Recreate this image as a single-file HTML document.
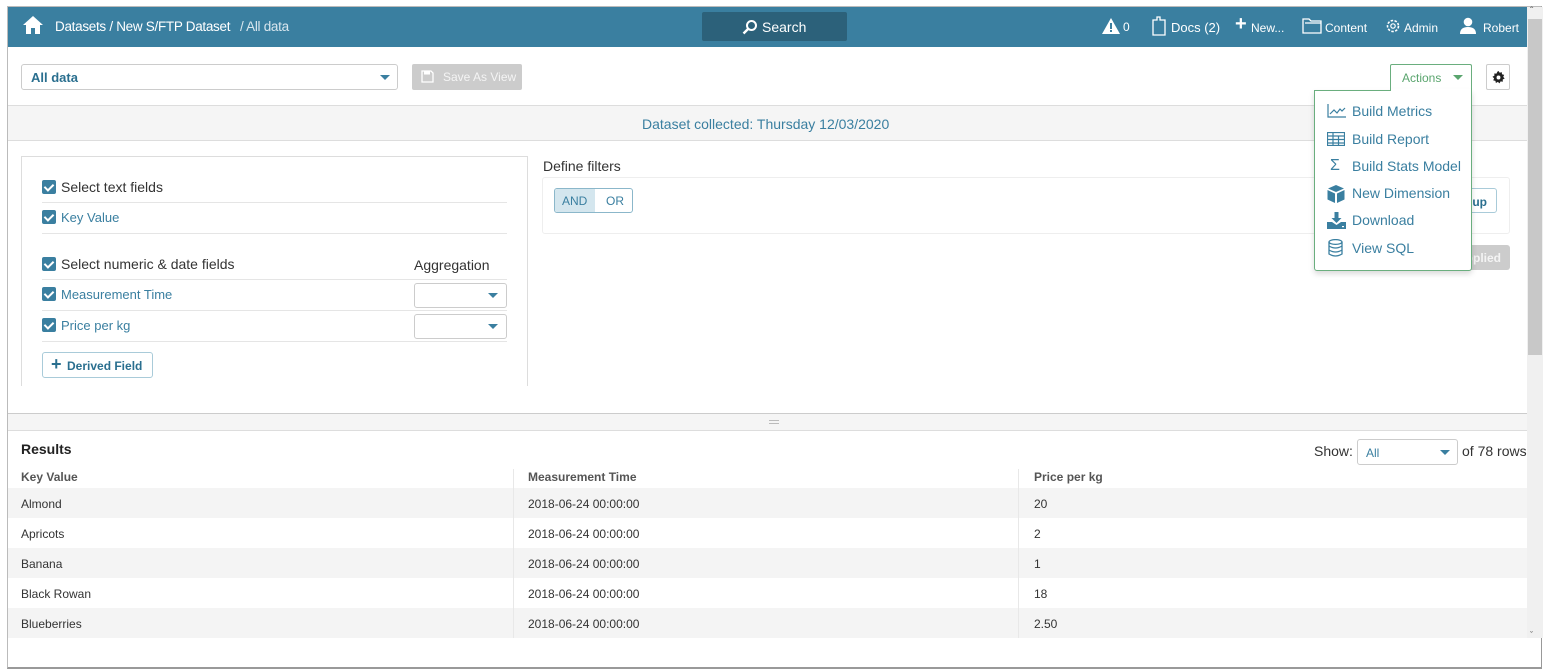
<!DOCTYPE html>
<html><head><meta charset="utf-8"><style>
*{box-sizing:border-box;margin:0;padding:0}
body{width:1549px;height:672px;background:#fff;font-family:"Liberation Sans",Arial,sans-serif;font-size:13px;color:#333;position:relative;overflow:hidden}
.a{position:absolute}
.frame{left:7px;top:6px;width:1535px;height:663px;border:1px solid #bbb;border-bottom:2px solid #999;border-right:1px solid #999}
.hdr{left:8px;top:7px;width:1519px;height:40px;background:#3a7fa0;color:#fff;font-size:14px}
.hdr span{position:absolute;top:12px}
.cb{display:inline-block;width:14px;height:14px;background:#3a7fa0;border-radius:2px;vertical-align:-2px;margin-right:5px;position:relative}
.cb:after{content:"";position:absolute;left:4px;top:1.5px;width:4px;height:7px;border:solid #fff;border-width:0 2px 2px 0;transform:rotate(45deg)}
.line{height:1px;background:#e5e5e5}
.sel{border:1px solid #ccc;border-radius:3px;background:#fff}
.caret{position:absolute;width:0;height:0;border-left:5px solid transparent;border-right:5px solid transparent;border-top:5px solid #3a7fa0}
.row{left:8px;width:1519px;height:30px}
.row span{position:absolute;top:9px;font-size:12px;color:#333}
.mi{position:absolute;left:1352px;font-size:14px;color:#3a7fa0}
.ic{position:absolute;left:1327px}
</style></head><body>
<div class="a frame"></div>
<div class="a hdr">
<svg class="a" style="left:14px;top:8px" width="22" height="20" viewBox="0 0 22 20"><path d="M11 1 L1 10 H4 V19 H9 V13 H13 V19 H18 V10 H21 Z" fill="#fff"/></svg>
<span style="left:47px;font-size:13.5px;letter-spacing:-0.3px">Datasets / New S/FTP Dataset</span><span style="left:232px;color:#d8e6ee;font-size:13.5px;letter-spacing:-0.3px">/ All data</span>
<div class="a" style="left:694px;top:5px;width:145px;height:29px;background:#2c617a;border-radius:2px"></div>
<svg class="a" style="left:734px;top:12px" width="16" height="16" viewBox="0 0 16 16"><circle cx="9.5" cy="6.5" r="4.5" stroke="#fff" stroke-width="2" fill="none"/><path d="M6 10 L1.5 14.5" stroke="#fff" stroke-width="2.4"/></svg>
<span style="left:754px">Search</span>
<svg class="a" style="left:1094px;top:11px" width="18" height="16" viewBox="0 0 18 16"><path d="M9 0 L18 16 H0 Z" fill="#fff"/><rect x="8" y="5" width="2" height="6" fill="#3a7fa0"/><rect x="8" y="12" width="2" height="2" fill="#3a7fa0"/></svg>
<span style="left:1115px;font-size:12px;top:13px">0</span>
<svg class="a" style="left:1144px;top:9px" width="14" height="20" viewBox="0 0 14 20"><path d="M1 4 H5 V1 H8 V4 H13 V19 H1 Z" stroke="#fff" stroke-width="1.3" fill="none"/></svg>
<span style="left:1163px;font-size:13px;top:13px">Docs (2)</span>
<span style="left:1227px;font-size:20px;top:6px;font-weight:bold">+</span><span style="left:1243px;font-size:12px;top:14px">New...</span>
<svg class="a" style="left:1294px;top:11px" width="20" height="16" viewBox="0 0 20 16"><path d="M1 1 H7 L9 3 H19 V15 H1 Z M3 5 H19" stroke="#fff" stroke-width="1.3" fill="none"/></svg>
<span style="left:1317px;font-size:12px;top:14px">Content</span>
<svg class="a" style="left:1377px;top:11px" width="16" height="16" viewBox="0 0 16 16"><circle cx="8" cy="8" r="5.5" stroke="#fff" stroke-width="1.6" fill="none" stroke-dasharray="2.5 1.4"/><circle cx="8" cy="8" r="2.2" stroke="#fff" stroke-width="1.2" fill="none"/></svg>
<span style="left:1396px;font-size:12px;top:14px">Admin</span>
<svg class="a" style="left:1452px;top:10px" width="16" height="17" viewBox="0 0 16 17"><circle cx="8" cy="5" r="4.3" fill="#fff"/><path d="M0 17 Q0 10 8 10 Q16 10 16 17Z" fill="#fff"/></svg>
<span style="left:1475px;font-size:12px;top:14px">Robert</span>
</div>
<div class="a" style="left:1527px;top:7px;width:16px;height:631px;background:#f0f0f0"></div>
<div class="a" style="left:1528px;top:19px;width:14px;height:336px;background:#c8c8c8"></div>
<div class="a" style="left:1530px;top:6px;font-size:10px;color:#555">&#710;</div>
<div class="a sel" style="left:21px;top:64px;width:377px;height:26px"><span class="a" style="left:9px;top:5px;font-weight:bold;color:#2a6f8f">All data</span><div class="caret" style="left:358px;top:10px"></div></div>
<div class="a" style="left:412px;top:64px;width:110px;height:26px;background:#ccc;border-radius:2px;color:#f4f4f4;font-size:12px"><svg class="a" style="left:9px;top:6px" width="13" height="13" viewBox="0 0 13 13"><path d="M1 1 H10 L12 3 V12 H1 Z" stroke="#fff" stroke-width="1.3" fill="none"/><rect x="3" y="1.5" width="6" height="3" fill="#fff"/></svg><span class="a" style="left:31px;top:6px">Save As View</span></div>
<div class="a" style="left:1390px;top:64px;width:82px;height:27px;border:1px solid #6aae7e;border-bottom:none;border-radius:2px 2px 0 0;background:#fff;color:#5aa56e;font-size:12px"><span class="a" style="left:11px;top:6px">Actions</span><div class="caret" style="left:62px;top:10px;border-top-color:#5aa56e"></div></div>
<div class="a" style="left:1486px;top:64px;width:24px;height:26px;border:1px solid #ccc;border-radius:2px"><svg class="a" style="left:5px;top:6px" width="13" height="13" viewBox="0 0 16 16"><path d="M8 0 L9.5 2.2 L12 1.4 L12.3 4 L15 4.8 L13.8 7.2 L15.6 9.3 L13.2 10.5 L13.3 13.2 L10.6 12.8 L9.2 15.2 L7.2 13.4 L4.8 14.8 L4.2 12.1 L1.5 11.5 L2.6 9 L0.6 7 L3 5.7 L2.8 3 L5.5 3.3 L6.7 0.8 Z" fill="#222"/><circle cx="8" cy="8" r="2.4" fill="#fff"/></svg></div>
<div class="a" style="left:8px;top:105px;width:1519px;height:36px;background:#f5f5f5;border-top:1px solid #ddd;border-bottom:1px solid #ddd"></div>
<div class="a" style="left:642px;top:116px;font-size:14px;color:#3a7fa0">Dataset collected: Thursday 12/03/2020</div>
<div class="a" style="left:21px;top:156px;width:507px;height:230px;border:1px solid #ddd;border-bottom:none"></div>
<div class="a" style="left:42px;top:179px;font-size:14px"><span class="cb"></span>Select text fields</div>
<div class="a line" style="left:42px;top:202px;width:465px"></div>
<div class="a" style="left:42px;top:210px;color:#3a7fa0"><span class="cb"></span>Key Value</div>
<div class="a line" style="left:42px;top:233px;width:465px"></div>
<div class="a" style="left:42px;top:256px;font-size:14px"><span class="cb"></span>Select numeric &amp; date fields</div>
<div class="a" style="left:414px;top:257px;font-size:14px">Aggregation</div>
<div class="a line" style="left:42px;top:279px;width:465px"></div>
<div class="a" style="left:42px;top:287px;color:#3a7fa0"><span class="cb"></span>Measurement Time</div>
<div class="a sel" style="left:414px;top:283px;width:93px;height:25px"><div class="caret" style="left:73px;top:9px"></div></div>
<div class="a line" style="left:42px;top:310px;width:465px"></div>
<div class="a" style="left:42px;top:318px;color:#3a7fa0"><span class="cb"></span>Price per kg</div>
<div class="a sel" style="left:414px;top:314px;width:93px;height:25px"><div class="caret" style="left:73px;top:9px"></div></div>
<div class="a line" style="left:42px;top:341px;width:465px"></div>
<div class="a" style="left:42px;top:352px;width:111px;height:26px;border:1px solid #a9cbd9;border-radius:3px;color:#2a6f8f;font-weight:bold;font-size:12px"><span class="a" style="left:8px;top:1px;font-size:18px">+</span><span class="a" style="left:24px;top:6px">Derived Field</span></div>
<div class="a" style="left:543px;top:158px;font-size:14px">Define filters</div>
<div class="a" style="left:542px;top:177px;width:968px;height:57px;border:1px solid #eee;border-radius:3px"></div>
<div class="a" style="left:554px;top:188px;width:79px;height:25px;border:1px solid #8bb7ca;border-radius:3px;overflow:hidden;font-size:12px;color:#3a7fa0"><div class="a" style="left:0;top:0;width:40px;height:25px;background:#d4e6ee"></div><span class="a" style="left:7px;top:5px">AND</span><span class="a" style="left:51px;top:5px">OR</span></div>
<div class="a" style="left:1440px;top:188px;width:57px;height:25px;border:1px solid #a9cbd9;border-radius:3px;color:#2a6f8f;font-weight:bold;font-size:12px"><span class="a" style="right:9px;top:6px">Group</span></div>
<div class="a" style="left:1440px;top:245px;width:70px;height:25px;background:#ccc;border-radius:3px;color:#f4f4f4;font-weight:bold;font-size:12px"><span class="a" style="right:9px;top:6px">Applied</span></div>
<div class="a" style="left:1314px;top:90px;width:158px;height:181px;background:#fff;border:1px solid #6aae7e;border-radius:0 0 3px 3px;box-shadow:0 3px 6px rgba(0,0,0,.15)"></div>
<div class="a" style="left:1391px;top:89px;width:80px;height:2px;background:#fff"></div>
<svg class="ic" style="top:104px" width="19" height="14" viewBox="0 0 19 14"><path d="M1 0 V13 H19 M3 10 L7 6 L10 9 L13 5 L15 7 L18 4" stroke="#3a7fa0" stroke-width="1.2" fill="none"/></svg>
<span class="mi" style="top:103px">Build Metrics</span>
<svg class="ic" style="top:132px" width="18" height="14" viewBox="0 0 18 14"><path d="M0.5 0.5 H17.5 V13.5 H0.5 Z M0.5 4 H17.5 M0.5 7.5 H17.5 M0.5 11 H17.5 M6 0.5 V13.5 M11.5 4 V13.5" stroke="#3a7fa0" stroke-width="1.2" fill="none"/></svg>
<span class="mi" style="top:131px">Build Report</span>
<span class="a" style="left:1330px;top:157px;font-size:16px;color:#3a7fa0">Σ</span>
<span class="mi" style="top:158px">Build Stats Model</span>
<svg class="ic" style="top:185px" width="18" height="18" viewBox="0 0 18 18"><path d="M9 0 L17 3.5 L9 7 L1 3.5 Z" fill="#3a7fa0"/><path d="M0.5 5 L8 8.5 V18 L0.5 14.5 Z M17.5 5 L10 8.5 V18 L17.5 14.5 Z" fill="#3a7fa0"/></svg>
<span class="mi" style="top:185px">New Dimension</span>
<svg class="ic" style="top:212px" width="19" height="17" viewBox="0 0 19 17"><path d="M7.5 0 H11.5 V6 H14.5 L9.5 11 L4.5 6 H7.5 Z" fill="#3a7fa0"/><path d="M0 10 H5 L9.5 13 L14 10 H19 V17 H0 Z" fill="#3a7fa0"/><rect x="15" y="14" width="2" height="1.2" fill="#fff"/></svg>
<span class="mi" style="top:212px">Download</span>
<svg class="ic" style="left:1328px;top:239px" width="15" height="18" viewBox="0 0 15 18"><ellipse cx="7.5" cy="3" rx="6.5" ry="2.4" stroke="#3a7fa0" stroke-width="1.3" fill="none"/><path d="M1 3 V15 Q7.5 19 14 15 V3 M1 7 Q7.5 11 14 7 M1 11 Q7.5 15 14 11" stroke="#3a7fa0" stroke-width="1.3" fill="none"/></svg>
<span class="mi" style="top:240px">View SQL</span>
<div class="a" style="left:8px;top:413px;width:1519px;height:18px;background:#f5f5f5;border-top:1px solid #ccc;border-bottom:1px solid #ddd"></div>
<div class="a" style="left:769px;top:420px;width:10px;height:4px;border-top:1px solid #bbb;border-bottom:1px solid #bbb"></div>
<div class="a" style="left:21px;top:441px;font-size:14px;font-weight:bold;color:#222">Results</div>
<div class="a" style="left:1314px;top:443px;font-size:14px">Show:</div>
<div class="a sel" style="left:1357px;top:439px;width:101px;height:26px"><span class="a" style="left:8px;top:6px;font-size:12px;color:#3a7fa0">All</span><div class="caret" style="left:82px;top:10px"></div></div>
<div class="a" style="left:1462px;top:443px;font-size:14px">of 78 rows</div>
<div class="a" style="left:21px;top:470px;font-size:12px;font-weight:bold;color:#555">Key Value</div>
<div class="a" style="left:528px;top:470px;font-size:12px;font-weight:bold;color:#555">Measurement Time</div>
<div class="a" style="left:1034px;top:470px;font-size:12px;font-weight:bold;color:#555">Price per kg</div>
<div class="a row" style="top:488px;background:#f4f4f4"><span style="left:13px">Almond</span><span style="left:520px">2018-06-24 00:00:00</span><span style="left:1026px">20</span></div>
<div class="a row" style="top:518px"><span style="left:13px">Apricots</span><span style="left:520px">2018-06-24 00:00:00</span><span style="left:1026px">2</span></div>
<div class="a row" style="top:548px;background:#f4f4f4"><span style="left:13px">Banana</span><span style="left:520px">2018-06-24 00:00:00</span><span style="left:1026px">1</span></div>
<div class="a row" style="top:578px"><span style="left:13px">Black Rowan</span><span style="left:520px">2018-06-24 00:00:00</span><span style="left:1026px">18</span></div>
<div class="a row" style="top:608px;background:#f4f4f4"><span style="left:13px">Blueberries</span><span style="left:520px">2018-06-24 00:00:00</span><span style="left:1026px">2.50</span></div>
<div class="a" style="left:513px;top:469px;width:1px;height:169px;background:#e8e8e8"></div>
<div class="a" style="left:1018px;top:469px;width:1px;height:169px;background:#e8e8e8"></div>
<div class="a" style="left:1530px;top:630px;font-size:9px;color:#555">&#711;</div>
</body></html>
